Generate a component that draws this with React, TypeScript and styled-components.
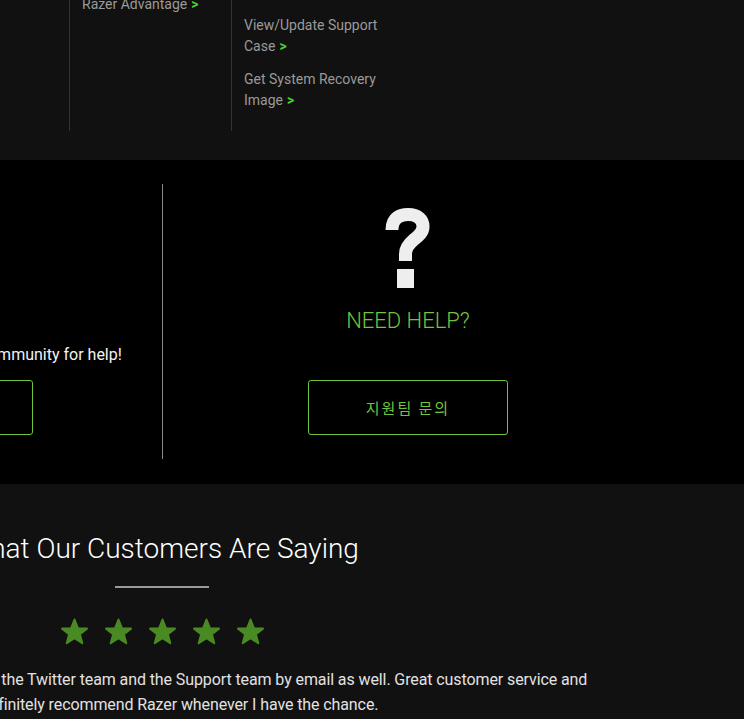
import styled, { createGlobalStyle } from 'styled-components';

const GlobalStyle = createGlobalStyle`
  html, body {
    margin: 0;
    padding: 0;
    background: #111111;
    overflow: hidden;
  }
  body {
    font-family: Roboto, "Noto Sans", "Liberation Sans", sans-serif;
  }
`

const GREEN = '#6fc53e';

// Верхний блок со ссылками поддержки
const LinksSection = styled.section`
  background: #111111;
  margin-top: -39px;
  padding-bottom: 29px;
`

const LinksGrid = styled.div`
  display: flex;
  margin-left: -93px;
`

const LinksColumn = styled.div<{ $divider?: boolean }>`
  width: 162px;
  box-sizing: border-box;
  padding: 0 0 20px 12px;
  border-left: ${p => (p.$divider ? '1px solid #333333' : 'none')};
  display: flex;
  flex-direction: column;
  gap: 12px;
`

const SupportLink = styled.a`
  color: #9a9a9a;
  font-size: 14px;
  line-height: 21px;
  text-decoration: none;

  span {
    color: #44d62c;
    font-weight: 700;
    margin-left: 4px;
  }
`

// Блок помощи
const HelpSection = styled.section`
  background: #000000;
  padding: 24px 0 25px;
`

const HelpGrid = styled.div`
  display: grid;
  grid-template-columns: 458px 491px;
  margin-left: -296px;
`

const HelpColumn = styled.div<{ $divider?: boolean }>`
  display: flex;
  flex-direction: column;
  align-items: center;
  padding: 23px 0 24px;
  border-left: ${p => (p.$divider ? '1px solid #8a8a8a' : 'none')};
`

const IconBox = styled.div`
  height: 82px;
  display: flex;
  justify-content: center;
`

const HelpTitle = styled.h3`
  margin: 19px 0 0;
  font-size: 22px;
  line-height: 26px;
  font-weight: 300;
  color: ${GREEN};
`

const HelpText = styled.p`
  margin: 9px 0 0;
  min-height: 24px;
  font-size: 16px;
  line-height: 24px;
  color: #f2f2f2;
`

const OutlineButton = styled.a`
  margin-top: 13px;
  width: 200px;
  height: 55px;
  box-sizing: border-box;
  border: 1px solid ${GREEN};
  border-radius: 3px;
  display: flex;
  align-items: center;
  justify-content: center;
  color: ${GREEN};
  font-family: "Noto Sans CJK KR", Roboto, sans-serif;
  font-size: 15px;
  letter-spacing: 2px;
  text-decoration: none;
`

// Отзывы клиентов
const ReviewSection = styled.section`
  background: #111111;
  padding-top: 48px;
  height: 300px;
`

const ReviewInner = styled.div`
  width: 980px;
  margin-left: -328px;
  display: flex;
  flex-direction: column;
  align-items: center;
`

const ReviewTitle = styled.h2`
  margin: 0;
  font-size: 28px;
  line-height: 34px;
  font-weight: 300;
  color: #ffffff;
`

const TitleRule = styled.div`
  margin-top: 20px;
  width: 94px;
  height: 2px;
  background: #9a9a9a;
`

const Stars = styled.div`
  margin-top: 30px;
  display: flex;
  gap: 15px;
`

const Quote = styled.p`
  margin: 22px 0 0;
  font-size: 16px;
  line-height: 24.5px;
  letter-spacing: -0.1px;
  color: #e2e2e2;
  text-align: center;
  white-space: nowrap;
`

const QuestionIcon = () => (
  <svg width="46" height="82" viewBox="0 0 46 82">
    <path
      d="M7 23 C7 10 16 7.5 23 7.5 C33 7.5 38 12.5 38 19.5 C38 26 33 29.5 28.5 33 C22.5 38 20.5 42 20.5 47 L20.5 54"
      fill="none"
      stroke="#eeeeee"
      strokeWidth="13"
    />
    <rect x="12" y="62" width="17" height="19" fill="#eeeeee" />
  </svg>
);

const StarIcon = () => (
  <svg width="29" height="28" viewBox="0 0 29 28">
    <polygon
      points="14.5,1.5 17.9,10.2 27,10.6 19.9,16.3 22.3,25.2 14.5,20.1 6.7,25.2 9.1,16.3 2,10.6 11.1,10.2"
      fill="#4a8a22"
      stroke="#4a8a22"
      strokeWidth="2"
      strokeLinejoin="round"
    />
  </svg>
);

const columns = [
  ['Warranty Information'],
  ['Product Registration', 'Razer Advantage'],
  ['Contact Customer Support', 'View/Update Support Case', 'Get System Recovery Image'],
  [],
];

const App = () => {
  return (
    <>
      <GlobalStyle />
      <LinksSection>
        <LinksGrid>
          {columns.map((items, i) => (
            <LinksColumn key={i} $divider={i > 0 && i < 3}>
              {items.map(label => (
                <SupportLink key={label} href="#">
                  {label}
                  <span>&gt;</span>
                </SupportLink>
              ))}
            </LinksColumn>
          ))}
        </LinksGrid>
      </LinksSection>

      <HelpSection>
        <HelpGrid>
          <HelpColumn>
            <IconBox />
            <HelpTitle>FORUMS</HelpTitle>
            <HelpText>Feel free to ask the Razer Insider community for help!</HelpText>
            <OutlineButton href="#">커뮤니티 방문</OutlineButton>
          </HelpColumn>
          <HelpColumn $divider>
            <IconBox>
              <QuestionIcon />
            </IconBox>
            <HelpTitle>NEED HELP?</HelpTitle>
            <HelpText />
            <OutlineButton href="#">지원팀 문의</OutlineButton>
          </HelpColumn>
        </HelpGrid>
      </HelpSection>

      <ReviewSection>
        <ReviewInner>
          <ReviewTitle>What Our Customers Are Saying</ReviewTitle>
          <TitleRule />
          <Stars>
            {[0, 1, 2, 3, 4].map(i => (
              <StarIcon key={i} />
            ))}
          </Stars>
          <Quote>
            I had a headset issue and I contacted the Twitter team and the Support team by email as well. Great customer service and
            <br />
            I will definitely recommend Razer whenever I have the chance.
          </Quote>
        </ReviewInner>
      </ReviewSection>
    </>
  );
}

export default App;
